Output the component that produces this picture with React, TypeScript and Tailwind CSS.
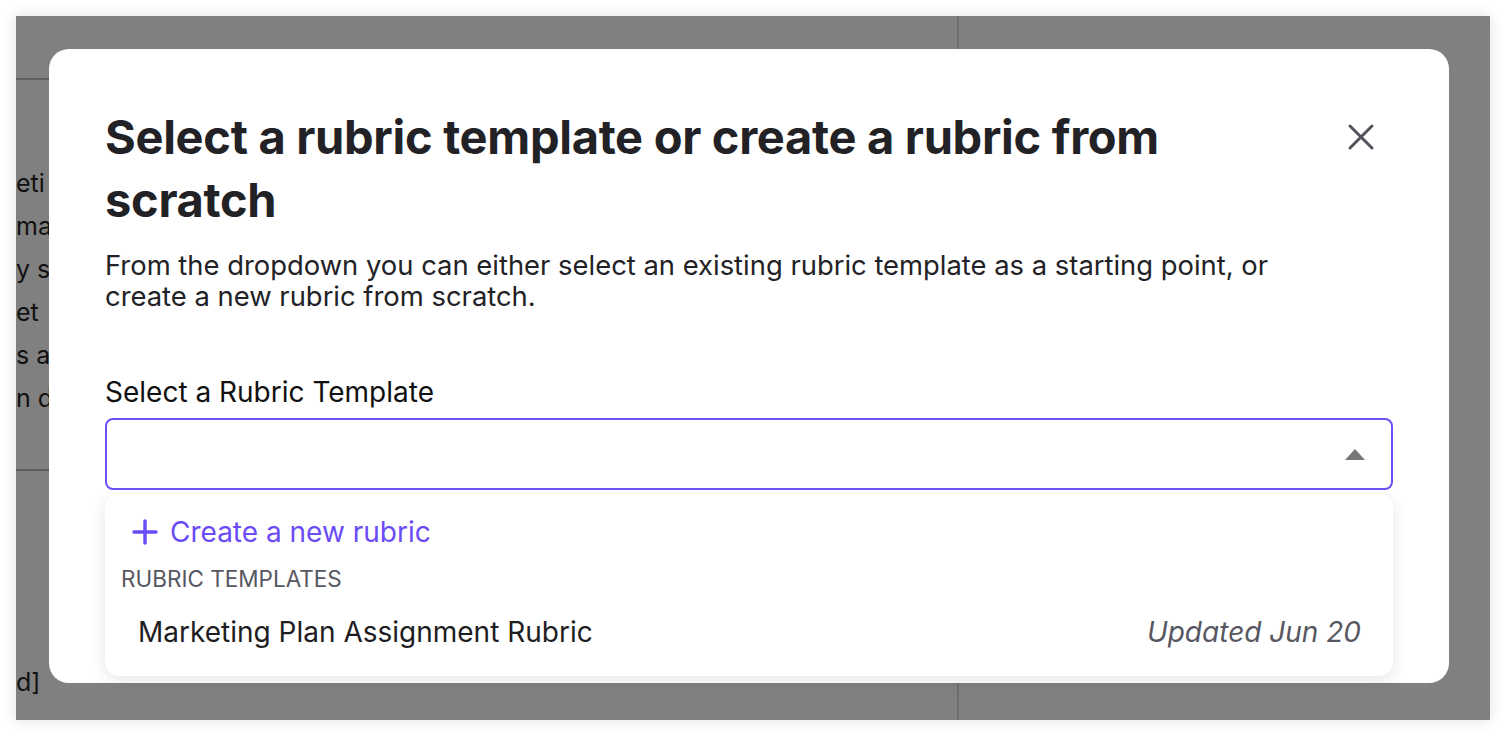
import React from "react";

const lines = ["eti", "ma", "y s", "et", "s a", "n de"];

const XIcon = () => (
  <svg width="28" height="28" viewBox="0 0 28 28" fill="none">
    <path d="M3 3L25 25M25 3L3 25" stroke="#53535d" strokeWidth="3" strokeLinecap="round" />
  </svg>
);

const PlusIcon = () => (
  <svg width="26" height="26" viewBox="0 0 26 26" fill="none">
    <path d="M13 2V24M2 13H24" stroke="#6a4cf6" strokeWidth="3.5" strokeLinecap="round" />
  </svg>
);

const App = () => {
  return (
    <div className="w-[1506px] h-[736px] bg-white p-4 font-['Inter',sans-serif]">
      <div className="relative w-full h-full bg-[#808080] overflow-hidden shadow-[0_0_14px_rgba(0,0,0,0.12)] flex">
        {/* page behind the overlay */}
        <div className="w-[943px] h-full flex flex-col text-[25px] text-[#111] border-r-2 border-[#6e6e6e]">
          <div className="h-[64px] shrink-0 border-b-2 border-[#5e5e5e]" />
          <div className="pt-[82px] flex flex-col">
            {lines.map((l) => (
              <div key={l} className="h-[43px] leading-[43px] whitespace-nowrap">
                {l}
              </div>
            ))}
          </div>
          <div className="mt-[49px] border-b-2 border-[#5e5e5e]" />
          <div className="flex-1 flex items-end pb-[22px] leading-[32px]">d]</div>
        </div>
        <div className="flex-1" />

        {/* modal */}
        <div className="absolute left-[33px] top-[33px] w-[1400px] h-[634px] bg-white rounded-[20px] px-[56px] pt-[56px]">
          <div className="flex gap-6 items-start">
            <h1 className="flex-1 text-[47px] leading-[63px] font-bold text-[#222226] tracking-[-0.3px]">
              Select a rubric template or create a rubric from scratch
            </h1>
            <button type="button" className="w-16 h-16 shrink-0 flex items-center justify-center">
              <XIcon />
            </button>
          </div>

          <p className="mt-[19px] text-[27.4px] leading-[31px] text-[#222226] w-[1200px]">
            From the dropdown you can either select an existing rubric template as a starting point, or create a new
            rubric from scratch.
          </p>

          <div className="mt-[64px]">
            <label className="block text-[28px] leading-[32px] text-[#111]">Select a Rubric Template</label>
            <div className="mt-[10px] h-[72px] border-2 border-[#6b52f5] rounded-[8px] flex items-center justify-end pr-[26px]">
              <div className="w-0 h-0 border-l-[10px] border-r-[10px] border-b-[11px] border-l-transparent border-r-transparent border-b-[#777]" />
            </div>

            <div className="mt-[4px] rounded-[14px] bg-white shadow-[0_4px_16px_rgba(0,0,0,0.10)] py-3">
              <div className="h-[52px] flex items-center gap-[12px] pl-[27px] text-[#6a4cf6] text-[28px]">
                <PlusIcon />
                <span>Create a new rubric</span>
              </div>
              <div className="h-[42px] flex items-center pl-[16px] text-[22.5px] text-[#575762] uppercase">
                Rubric templates
              </div>
              <div className="h-[64px] flex items-center justify-between pl-[33px] pr-[32px] text-[28px]">
                <span className="text-[#1d1d22]">Marketing Plan Assignment Rubric</span>
                <span className="italic text-[#575762]">Updated Jun 20</span>
              </div>
            </div>
          </div>
        </div>
      </div>
    </div>
  );
};

export default App;
